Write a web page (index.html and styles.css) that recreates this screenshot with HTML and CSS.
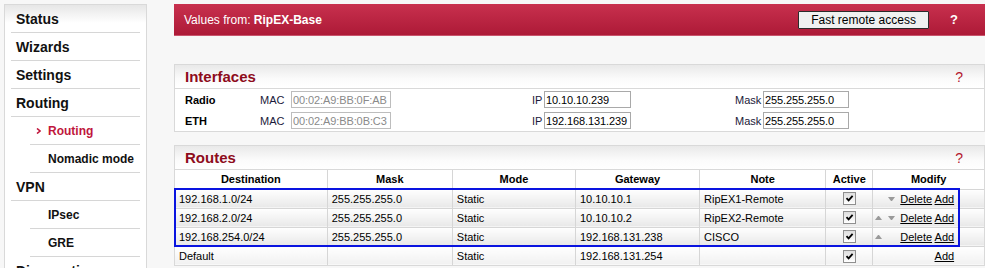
FILE: index.html
```html
<!DOCTYPE html>
<html lang="en">
<head>
    <meta charset="UTF-8">
    <title>RipEX - Routing</title>
    <link rel="stylesheet" href="styles.css">
</head>
<body>
<div class="page">
    <!-- Left menu -->
    <aside class="sidebar">
        <ul class="menu">
            <li class="menu-item"><a href="#">Status</a></li>
            <li class="menu-item"><a href="#">Wizards</a></li>
            <li class="menu-item"><a href="#">Settings</a></li>
            <li class="menu-item"><a href="#">Routing</a></li>
            <li class="menu-item sub active">
                <a href="#"><svg class="menu-arrow" width="5" height="6" viewBox="0 0 5 6"><polyline points="1,0.5 4,3 1,5.5" fill="none" stroke="#c0163c" stroke-width="1.6"/></svg>Routing</a>
            </li>
            <li class="menu-item sub"><a href="#">Nomadic mode</a></li>
            <li class="menu-item"><a href="#">VPN</a></li>
            <li class="menu-item sub"><a href="#">IPsec</a></li>
            <li class="menu-item sub"><a href="#">GRE</a></li>
            <li class="menu-item"><a href="#">Diagnostics</a></li>
            <li class="menu-item"><a href="#">Device</a></li>
        </ul>
    </aside>

    <main class="content">
        <!-- Top bar -->
        <div class="topbar">
            <div class="topbar-title">Values from: <b>RipEX-Base</b></div>
            <div class="topbar-actions">
                <button class="btn" type="button">Fast remote access</button>
                <span class="topbar-help">?</span>
            </div>
        </div>

        <!-- Interfaces -->
        <section class="box">
            <div class="box-head">
                <h3>Interfaces</h3>
                <span class="box-help">?</span>
            </div>
            <div class="iface-grid">
                <div class="iface-name">Radio</div>
                <div class="iface-label">MAC</div>
                <div><input class="field field-mac" value="00:02:A9:BB:0F:AB" readonly></div>
                <div class="iface-label">IP</div>
                <div><input class="field field-ip" value="10.10.10.239"></div>
                <div class="iface-label">Mask</div>
                <div><input class="field field-mask" value="255.255.255.0"></div>

                <div class="iface-name">ETH</div>
                <div class="iface-label">MAC</div>
                <div><input class="field field-mac" value="00:02:A9:BB:0B:C3" readonly></div>
                <div class="iface-label">IP</div>
                <div><input class="field field-ip" value="192.168.131.239"></div>
                <div class="iface-label">Mask</div>
                <div><input class="field field-mask" value="255.255.255.0"></div>
            </div>
        </section>

        <!-- Routes -->
        <section class="box routes">
            <div class="box-head">
                <h3>Routes</h3>
                <span class="box-help">?</span>
            </div>
            <table class="routes-table">
                <colgroup>
                    <col style="width:152px"><col style="width:125px"><col style="width:123px">
                    <col style="width:124px"><col style="width:126px"><col style="width:47px"><col style="width:111px">
                </colgroup>
                <thead>
                    <tr>
                        <th>Destination</th><th>Mask</th><th>Mode</th><th>Gateway</th><th>Note</th><th>Active</th><th>Modify</th>
                    </tr>
                </thead>
                <tbody>
                    <tr class="route">
                        <td>192.168.1.0/24</td><td>255.255.255.0</td><td>Static</td><td>10.10.10.1</td><td>RipEX1-Remote</td>
                        <td class="center"><span class="check"></span></td>
                        <td class="modify"><span class="arrows"><i class="arr"></i><i class="arr down"></i></span><a href="#">Delete</a> <a href="#">Add</a></td>
                    </tr>
                    <tr class="route">
                        <td>192.168.2.0/24</td><td>255.255.255.0</td><td>Static</td><td>10.10.10.2</td><td>RipEX2-Remote</td>
                        <td class="center"><span class="check"></span></td>
                        <td class="modify"><span class="arrows"><i class="arr up"></i><i class="arr down"></i></span><a href="#">Delete</a> <a href="#">Add</a></td>
                    </tr>
                    <tr class="route">
                        <td>192.168.254.0/24</td><td>255.255.255.0</td><td>Static</td><td>192.168.131.238</td><td>CISCO</td>
                        <td class="center"><span class="check"></span></td>
                        <td class="modify"><span class="arrows"><i class="arr up"></i><i class="arr"></i></span><a href="#">Delete</a> <a href="#">Add</a></td>
                    </tr>
                    <tr class="route default">
                        <td>Default</td><td></td><td>Static</td><td>192.168.131.254</td><td></td>
                        <td class="center"><span class="check"></span></td>
                        <td class="modify"><span class="arrows"><i class="arr"></i><i class="arr"></i></span><a href="#" class="hidden">Delete</a> <a href="#">Add</a></td>
                    </tr>
                </tbody>
            </table>
            <!-- highlight frame drawn over the static routes -->
            <div class="highlight"></div>
        </section>
    </main>
</div>
</body>
</html>
```

FILE: styles.css
```css
/* Base */
* {
    margin: 0;
    padding: 0;
    box-sizing: border-box;
}

body {
    font-family: "Liberation Sans", Arial, sans-serif;
    font-size: 12px;
    color: #000;
    background-color: #f7f7f7;
    overflow: hidden;
}

.page {
    display: flex;
    align-items: flex-start;
    gap: 27px;
    padding: 4px 0 0 4px;
}

/* Sidebar */
.sidebar {
    width: 143px;
    flex-shrink: 0;
    background: linear-gradient(#e6e6e6 0, #ffffff 18px, #ffffff 100%);
    border: 1px solid #d9d9d9;
    padding: 0 6px;
}

.menu {
    list-style: none;
}

.menu-item {
    border-bottom: 1px solid #d6d6d6;
}

.menu-item a {
    display: flex;
    align-items: center;
    height: 27px;
    padding-left: 5px;
    font-size: 14px;
    font-weight: 700;
    color: #111;
    text-decoration: none;
}

.menu-item.sub {
    margin-left: 19px;
}

.menu-item.sub a {
    padding-left: 18px;
    font-size: 12px;
}

.menu-item.active a {
    color: #c0163c;
}

.menu-arrow {
    margin-left: -12px;
    margin-right: 7px;
}

/* Main column */
.content {
    flex: 1;
    min-width: 0;
}

.topbar {
    display: flex;
    justify-content: space-between;
    align-items: center;
    height: 32px;
    padding-left: 10px;
    margin-bottom: 28px;
    background: linear-gradient(#c8304e, #ad1a37);
    border-bottom: 1px solid #c9546c;
    color: #fff;
}

.topbar-title b {
    font-weight: 700;
}

.topbar-actions {
    display: flex;
    align-items: center;
    padding-right: 27px;
}

.btn {
    width: 131px;
    height: 18px;
    font-family: inherit;
    font-size: 12px;
    color: #000;
    background: #f0f0f0;
    border: 1px solid #2b2b2b;
    border-radius: 1px;
}

.topbar-help {
    margin-left: 21px;
    font-size: 13px;
    font-weight: 700;
}

/* Boxes */
.box {
    background-color: #fff;
    border: 1px solid #d9d9d9;
    margin-bottom: 13px;
}

.box-head {
    display: flex;
    justify-content: space-between;
    align-items: center;
    height: 24px;
    padding: 0 21px 0 10px;
    background: linear-gradient(#e9e9e9 0, #fbfbfb 14px, #ffffff 100%);
    border-bottom: 1px solid #d9d9d9;
}

.box-head h3 {
    font-size: 15px;
    font-weight: 700;
    color: #8e0c1c;
}

.box-help {
    font-size: 14px;
    color: #b3182e;
}

/* Interfaces */
.iface-grid {
    display: grid;
    grid-template-columns: 75px 31px 241px 12px 191px 28px 86px;
    row-gap: 4px;
    align-items: center;
    padding: 2px 0 2px 10px;
    font-size: 11px;
}

.iface-name {
    font-weight: 700;
}

.iface-label {
    color: #1a1a3a;
}

.field {
    display: block;
    height: 17px;
    padding: 0 1px;
    font-family: inherit;
    font-size: 11px;
    letter-spacing: -0.1px;
    color: #000;
    background: #fff;
    border: 1px solid #a9a9a9;
    outline: none;
}

.field-mac {
    width: 100px;
    color: #8a8a8a;
    border-color: #bdbdbd;
}

.field-ip {
    width: 87px;
}

.field-mask {
    width: 86px;
}

/* Routes */
.routes {
    position: relative;
}

.routes-table {
    width: 100%;
    table-layout: fixed;
    border-collapse: collapse;
    border-style: hidden;
    font-size: 11px;
}

.routes-table th,
.routes-table td {
    height: 19px;
    padding: 0 4px;
    border: 1px solid #d6d6d6;
    white-space: nowrap;
    overflow: hidden;
}

.routes-table th {
    font-weight: 700;
    text-align: center;
    background: #fff;
}

.routes-table td {
    text-align: left;
    background: linear-gradient(#ffffff, #e8e8e8);
}

.routes-table tr.default td {
    background: linear-gradient(#ffffff, #f1f1f1);
}

.routes-table td.center {
    text-align: center;
}

.check {
    display: inline-block;
    width: 13px;
    height: 13px;
    vertical-align: middle;
    border: 1px solid #8f8f8f;
    background:
        url("data:image/svg+xml,%3Csvg xmlns='http://www.w3.org/2000/svg' width='11' height='11'%3E%3Cpath d='M2.5 5.2 L4.6 7.4 L8.6 2.8' fill='none' stroke='%23000' stroke-width='1.8'/%3E%3C/svg%3E") center no-repeat,
        linear-gradient(#dedede, #ffffff);
}

.routes-table td.modify {
    padding-left: 2px;
}

.arrows {
    display: inline-flex;
    gap: 6px;
    width: 25px;
    vertical-align: 2px;
}

.arr {
    display: inline-block;
    width: 7px;
    height: 4px;
}

.arr.up {
    border-left: 3.5px solid transparent;
    border-right: 3.5px solid transparent;
    border-bottom: 4px solid #9a9a9a;
}

.arr.down {
    border-left: 3.5px solid transparent;
    border-right: 3.5px solid transparent;
    border-top: 4px solid #9a9a9a;
}

.modify a {
    color: #000;
    text-decoration: underline;
    font-size: 11px;
}

.modify a.hidden {
    visibility: hidden;
}

.highlight {
    position: absolute;
    left: -1px;
    top: 42px;
    width: 786px;
    height: 59px;
    border: 2px solid #0a14e0;
    pointer-events: none;
}
```
